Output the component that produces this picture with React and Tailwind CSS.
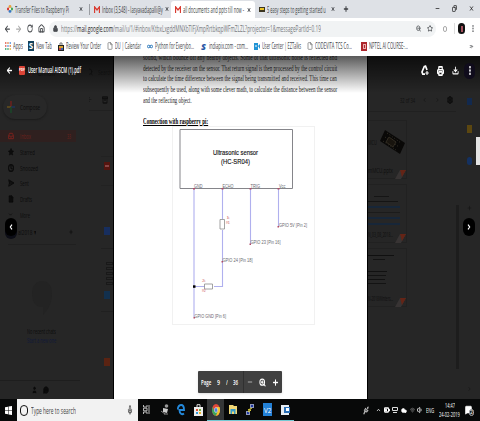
import { useLayoutEffect, useRef, useState } from "react";
import {
  ArrowLeft, ArrowRight, RotateCw, House, Lock, ZoomOut, ZoomIn, Star, Plus, Minus, X, Copy, EllipsisVertical,
  File, Printer, Download, ChevronLeft, ChevronRight, ChevronUp, ChevronDown, Clock, SendHorizontal, Inbox, Search,
  Archive, Settings, Mic, User, Wifi, Volume1, Cloud, BatteryMedium, MessageSquare, ChevronsRight, MessageCircleMore, Usb,
} from "lucide-react";

// Single line of text squeezed to an exact width
function Fit({ w, className = "", children }) {
  const ref = useRef(null);
  const [scale, setScale] = useState(1);
  useLayoutEffect(() => {
    const measure = () => ref.current && setScale(w / ref.current.offsetWidth);
    measure();
    document.fonts.ready.then(measure);
  }, [w]);
  return (
    <span className={"block shrink-0 leading-none " + className} style={{ width: w }}>
      <span ref={ref} className="inline-block origin-left whitespace-nowrap align-top" style={{ transform: `scaleX(${scale})` }}>
        {children}
      </span>
    </span>
  );
}

const squash = { preserveAspectRatio: "none" };

function GmailM() {
  return (
    <svg className="h-[7px] w-[6px] shrink-0" viewBox="0 0 6 7" preserveAspectRatio="none">
      <path d="M.5 7V.8L3 4 5.5.8V7" fill="none" stroke="#d93b30" strokeWidth="1.3" />
    </svg>
  );
}

function Tabs() {
  return (
    <div className="flex h-[18px] shrink-0 items-center bg-[#dee1e6] text-[9px] text-[#3c3f43]">
      <div className="flex w-[88px] items-center pl-[7px]">
        <svg className="mr-[2px] h-[8px] w-[6px]" viewBox="0 0 6 8">
          <circle cx="3" cy="1.5" r="1.4" fill="#e9a13b" /><circle cx="1.3" cy="4" r="1.4" fill="#d63d38" />
          <circle cx="4.7" cy="4" r="1.4" fill="#45a857" /><circle cx="3" cy="6.4" r="1.4" fill="#3779c2" />
          <circle cx="3" cy="4" r="1" fill="#fff" />
        </svg>
        <Fit w={54}>Transfer Files to Raspberry Pi</Fit>
        <X {...squash} className="ml-[10px] h-[6px] w-[4px]" strokeWidth={4} />
      </div>
      <div className="flex h-full w-[83px] items-center border-l border-transparent pl-[2px]">
        <span className="mr-[2px] h-[11px] w-px -translate-x-[2px] bg-[#9a9da2]" />
        <GmailM />
        <Fit w={61} className="ml-[2px]">Inbox (3,548) - lasyavadapalli@y</Fit>
        <X {...squash} className="ml-[2px] h-[6px] w-[4px] shrink-0" strokeWidth={4} />
      </div>
      <div className="mt-[2px] flex h-[18px] w-[84px] items-center rounded-t-[3px] bg-white pb-[1px] pl-[4px]">
        <GmailM />
        <Fit w={61} className="ml-[2px]">all documents and ppts till now -</Fit>
        <X {...squash} className="ml-[3px] h-[6px] w-[4px] shrink-0" strokeWidth={4} />
      </div>
      <div className="flex items-center pl-[4px]">
        <span className="flex h-[5px] w-[6px] items-center justify-center bg-[#3b3522]"><i className="h-[2px] w-[4px] bg-[#eac324]" /></span>
        <Fit w={59} className="ml-[2px]">5 easy steps to getting started u</Fit>
        <X {...squash} className="ml-[5px] h-[6px] w-[4px]" strokeWidth={4} />
        <Plus {...squash} className="ml-[8px] h-[8px] w-[6px]" strokeWidth={4} />
      </div>
      <div className="mb-[2px] ml-auto flex items-center gap-[12px] pr-[6px] text-[#222]">
        <Minus {...squash} className="h-[7px] w-[5px]" strokeWidth={3} />
        <Copy {...squash} className="h-[7px] w-[5px] -scale-x-100" strokeWidth={3} />
        <X {...squash} className="h-[7px] w-[5px]" strokeWidth={3} />
      </div>
    </div>
  );
}

function AddressBar() {
  return (
    <div className="flex h-[21px] shrink-0 items-center bg-white pl-[4px] text-[#4a4d51]">
      <ArrowLeft {...squash} className="h-[10px] w-[7px]" strokeWidth={3} />
      <ArrowRight {...squash} className="ml-[4px] h-[10px] w-[7px] text-[#aaa]" strokeWidth={3} />
      <RotateCw {...squash} className="ml-[5px] h-[9px] w-[6px]" strokeWidth={3} />
      <House {...squash} className="ml-[5px] h-[9px] w-[7px]" strokeWidth={3} />
      <div className="ml-[4px] flex h-[16px] w-[387px] items-center rounded-full bg-[#f1f3f4] pl-[4px] text-[9px]">
        <Lock {...squash} className="h-[7px] w-[5px]" strokeWidth={3} fill="currentColor" />
        <Fit w={260} className="ml-[3px] text-[#777a7e]">
          https://<span className="text-[#222]">mail.google.com</span>/mail/u/1/#inbox/KtbxLxgddMNXbTlFjXmpRrtbkqpWFmZLZL?projector=1&amp;messagePartId=0.19
        </Fit>
        <ZoomOut {...squash} className="ml-[95px] h-[7px] w-[5px] shrink-0" strokeWidth={3} />
        <Star {...squash} className="ml-[6px] h-[7px] w-[6px] shrink-0" strokeWidth={3} />
      </div>
      <span className="ml-[7px] h-[6px] w-[4px] rounded-full border border-[#aaa]" />
      <span className="ml-[7px] h-[11px] w-px bg-[#ddd]" />
      <span className="ml-[3px] flex h-[11px] w-[7px] items-center justify-center rounded-full bg-[#111]"><i className="h-[6px] w-[2px] bg-[#a4515d]" /></span>
      <EllipsisVertical {...squash} className="ml-[5px] h-[9px] w-[6px]" strokeWidth={3} />
    </div>
  );
}

function Bookmark({ icon, w, gap, children }) {
  return (
    <div className={"flex shrink-0 items-center " + gap}>
      {icon}
      <Fit w={w}>{children}</Fit>
    </div>
  );
}

function Bookmarks() {
  const page = <File {...squash} className="mr-[2px] h-[8px] w-[6px] text-[#777]" strokeWidth={2.5} />;
  return (
    <div className="flex h-[17px] shrink-0 items-center bg-white pb-[3px] pl-[5px] text-[8.5px] text-[#414448]">
      <Bookmark gap="" w={10} icon={
        <svg className="mr-[2px] h-[8px] w-[6px]" viewBox="0 0 6 8">
          <path d="M0 1h1.4M0 4h1.4" stroke="#dd5144" strokeWidth="1.5" /><path d="M2.3 1h1.4M4.6 4H6" stroke="#d97736" strokeWidth="1.5" />
          <path d="M4.6 1H6M2.3 4h1.4" stroke="#4388dc" strokeWidth="1.5" /><path d="M0 7h1.4M2.3 7h1.4" stroke="#29985f" strokeWidth="1.5" /><path d="M4.6 7H6" stroke="#e6b32e" strokeWidth="1.5" />
        </svg>}>Apps</Bookmark>
      <Bookmark gap="ml-[5px]" w={16} icon={<span className="mr-[2px] flex h-[10px] w-[6px] items-center justify-center bg-[#14415b] text-[8px] font-bold leading-none text-white">S</span>}>New Tab</Bookmark>
      <Bookmark gap="ml-[6px]" w={35} icon={
        <svg className="mr-[2px] h-[9px] w-[6px]" viewBox="0 0 6 9"><path d="M0 3h6v6H0z" fill="#222" /><path d="M2 3V1h2v2" fill="none" stroke="#777" /><path d="M1 4h4v2H1z" fill="#d9a436" /><path d="M1 6h2v2H1z" fill="#c24444" /><path d="M3 6h2v2H3z" fill="#3c65b4" /></svg>}>Review Your Order</Bookmark>
      <Bookmark gap="ml-[6px]" w={26} icon={page}>DU | Calendar</Bookmark>
      <Bookmark gap="ml-[6px]" w={39} icon={<svg className="mr-[2px] h-[5px] w-[6px]" viewBox="0 0 6 5"><circle cx="1.7" cy="2.5" r="1.3" fill="none" stroke="#2976ba" /><circle cx="4.3" cy="2.5" r="1.3" fill="none" stroke="#2976ba" /></svg>}>Python for Everybo...</Bookmark>
      <Bookmark gap="ml-[7px]" w={39} icon={<span className="mr-[2px] w-[6px] text-[9px] font-extrabold italic leading-none text-[#2757a5]">S</span>}>indiapix.com - com...</Bookmark>
      <Bookmark gap="ml-[6px]" w={39} icon={<svg className="mr-[2px] h-[7px] w-[6px]" viewBox="0 0 6 7"><path d="M0 0h4v7H0zM4 3l2-2v5z" fill="#2194d5" /><path d="M1 3h2" stroke="#fff" /></svg>}>User Center | EZTalks</Bookmark>
      <Bookmark gap="ml-[6px]" w={37} icon={page}>CODEVITA TCS Co...</Bookmark>
      <Bookmark gap="ml-[9px]" w={39} icon={<span className="mr-[2px] flex h-[9px] w-[6px] items-center justify-center bg-[#ad252c]"><i className="h-[5px] w-[3px] border border-[#e9adad]" /></span>}>NPTEL AI COURSE-...</Bookmark>
      <ChevronsRight {...squash} className="ml-auto mr-[6px] h-[5px] w-[5px]" strokeWidth={4} />
    </div>
  );
}

function FolderRow({ icon, label, w, active, count }) {
  return (
    <div className={"mb-[3.8px] flex h-[12px] w-[76px] shrink-0 items-center pl-[8px] " + (active ? "bg-[#2f201f] text-[#6b211d]" : "text-[#0c0c0c]")}>
      <span className="w-[12px]">{icon}</span>
      <Fit w={w}>{label}</Fit>
      {count && <Fit w={4} className="ml-[36px]">{count}</Fit>}
    </div>
  );
}

function Sidebar() {
  const ic = "h-[8px] w-[6px]";
  return (
    <div className="flex w-[89px] flex-col text-[8px] text-[#0c0c0c]">
      <div className="mt-[5px] flex h-[22px] items-center pl-[20px] opacity-60">
        <svg className="h-[8px] w-[12px]" viewBox="0 0 12 8"><path d="M1 8V1l5 4 5-4v7" fill="none" stroke="#5f1c1a" strokeWidth="1.5" /></svg>
        <Fit w={18} className="ml-[5px] text-[10px]">Gmail</Fit>
      </div>
      <div className="ml-[3px] mt-[12px] flex h-[24px] w-[44px] items-center rounded-full bg-[#282828] pl-[4px] shadow-[0_1px_2px_#1b1b1b]">
        <svg className="h-[12px] w-[8px]" viewBox="0 0 8 12"><path d="M4 0v6" stroke="#6d211c" strokeWidth="1.5" /><path d="M0 6h4" stroke="#67501b" strokeWidth="1.5" /><path d="M4 6h4" stroke="#1d3559" strokeWidth="1.5" /><path d="M4 6v6" stroke="#1a4728" strokeWidth="1.5" /></svg>
        <Fit w={20} className="ml-[5px]">Compose</Fit>
      </div>
      <div className="mt-[11px] flex flex-col">
        <FolderRow active label="Inbox" w={11} count="33" icon={<Inbox {...squash} className={ic} strokeWidth={4} />} />
        <FolderRow label="Starred" w={15} icon={<Star {...squash} className={ic} fill="currentColor" />} />
        <FolderRow label="Snoozed" w={18} icon={<Clock {...squash} className={ic} strokeWidth={5} />} />
        <FolderRow label="Sent" w={9} icon={<SendHorizontal {...squash} className={ic} strokeWidth={4} />} />
        <FolderRow label="Drafts" w={12} icon={<File {...squash} className={ic} fill="currentColor" />} />
        <FolderRow label="More" w={10} icon={<ChevronDown {...squash} className="h-[5px] w-[5px]" strokeWidth={3} />} />
      </div>
      <div className="mt-[1px] flex h-[13px] items-center pl-[5px]">
        <span className="h-[14px] w-[12px] rounded-full bg-[#0c0d16]" />
        <Fit w={18} className="ml-[1px]">al2018 ▾</Fit>
        <Plus {...squash} className="ml-[33px] h-[6px] w-[4px] shrink-0" strokeWidth={3} />
      </div>
      <div className="ml-[8px] mt-[5px] h-px w-[68px] bg-[#202020]" />
      <svg className="ml-[32px] mt-[36px] h-[34px] w-[20px]" viewBox="0 0 20 34"><path d="M10 0C4 0 0 5 0 13s4 13 9 13h2v8c5-5 9-12 9-21S16 0 10 0z" fill="#232323" /></svg>
      <Fit w={29} className="ml-[27px] mt-[12px]">No recent chats</Fit>
      <Fit w={29} className="ml-[27px] mt-[1.5px] text-[#10193a]">Start a new one</Fit>
      <div className="mt-[36px] h-px w-[80px] bg-[#1e1e1e]" />
      <div className="mt-[5px] flex gap-[6px] pl-[32px]">
        <User {...squash} className="h-[8px] w-[5px]" fill="currentColor" />
        <MessageCircleMore {...squash} className="h-[8px] w-[6px]" fill="currentColor" />
      </div>
    </div>
  );
}

function MailColumn() {
  return (
    <div className="flex flex-1 flex-col overflow-hidden text-[#101010]">
      <div className="mt-[8px] flex h-[16px] items-center gap-[5px] opacity-70">
        <Search {...squash} className="ml-[-2px] h-[8px] w-[6px] shrink-0" strokeWidth={3} />
        <Fit w={14} className="text-[7px]">Search</Fit>
      </div>
      <div className="mt-[15px] flex h-[9px] items-center gap-[10px]">
        <ArrowLeft {...squash} className="ml-[-2px] h-[7px] w-[5px] shrink-0" strokeWidth={2} />
        <Archive {...squash} className="h-[8px] w-[6px] shrink-0" strokeWidth={4} />
      </div>
      <div className="mt-[6px] h-px bg-[#202020]" />
      <div className="ml-[12px] mt-[45px] h-[30px] border-y border-[#222] pt-[5px]"><span className="ml-[3px] flex h-[8px] w-[6px] items-center justify-center bg-[#54150f]"><i className="h-[2px] w-[4px] bg-[#844]" /></span></div>
      <div className="ml-[12px] mt-[41px] h-[22px] border-b border-[#202020]"><span className="ml-[3px] block h-[8px] w-[6px] bg-[#172e5e]" /></div>
      <div className="ml-[17px] mt-[13px] flex flex-col gap-[2px]">
        {[0, 1, 2, 3, 4].map((i) => <span key={i} className="h-[3px] w-[7px] border border-[#191919]" />)}
      </div>
      <div className="ml-[12px] mt-[6px] h-[21px] border-b border-[#202020]"><span className="ml-[3px] block h-[8px] w-[6px] bg-[#12304e]" /></div>
      <span className="ml-[15px] mt-[46px] block h-[8px] w-[6px] bg-[#5a2312]" />
    </div>
  );
}

const wireLabels = [
  [194, 188, 8.5, "GND"], [222.5, 188, 11, "ECHO"], [250.5, 188, 9.5, "TRIG"], [279, 188, 6.5, "Vcc"],
  [279, 226.5, 28, "GPIO 5V [Pin 2]"], [250.5, 244, 30, "GPIO 23 [Pin 16]"],
  [222.5, 261.5, 30, "GPIO 24 [Pin 18]"], [194.5, 317.5, 31.5, "GPIO GND [Pin 6]"],
];

function Circuit() {
  return (
    <svg className="ml-[58px] h-[199px] w-[143px] shrink-0" viewBox="172 126 143 199" fontFamily="'Liberation Sans', Arial, sans-serif">
      <rect x="172.5" y="126.5" width="142" height="198" fill="#fff" stroke="#f1f1f1" />
      <path d="M180 129.5h112.500v59H180z" fill="none" stroke="#85858a" />
      <g fontSize="7.500" fill="#111" stroke="#111" strokeWidth=".15">
        <text x="213" y="155" textLength="45" lengthAdjust="spacingAndGlyphs">Ultrasonic sensor</text>
        <text x="221" y="163.500" textLength="29" lengthAdjust="spacingAndGlyphs">(HC-SR04)</text>
      </g>
      <path d="M194 189v128M222.500 189v30m0 11v56.500H214m-9 0h-11M250.500 189v55M278.500 189v38" fill="none" stroke="#b0b0ee" strokeWidth="1.1" />
      <path d="M220 219.500h4.500v9.500H220zM204.500 284h8v5h-8z" fill="#fff" stroke="#8c8c8c" strokeWidth=".8" />
      <rect x="193" y="285.300" width="2.500" height="2.500" fill="#000" />
      <g fill="#b04b66">
        <path d="M193 188h2v1.500h-2zM221.500 188h2v1.500h-2zM249.500 188h2v1.500h-2zM277.500 188h2v1.500h-2zM277.500 226h1.500v1.500h-1.500zM249.500 243.500h1.500v1.500h-1.500zM221.500 261h1.500v1.500h-1.500zM193.500 317h1.500v1.500h-1.500z" />
      </g>
      <g fontSize="4" fill="#d98686">
        <text x="226.500" y="219" textLength="3">1k</text><text x="226" y="223.500" textLength="4">R1</text>
        <text x="202" y="282" textLength="3.500">2k</text><text x="202" y="292" textLength="4">R2</text>
      </g>
      <g fontSize="5.4" fill="#6a6a6f">
        {wireLabels.map(([x, y, w, t]) => <text key={t} x={x} y={y} textLength={w} lengthAdjust="spacingAndGlyphs">{t}</text>)}
      </g>
    </svg>
  );
}

function DocumentPage() {
  const lines = [
    "sound, which bounce off any nearby objects. Some of that ultrasonic noise is reflected and",
    "detected by the receiver on the sensor. That return signal is then processed by the control circuit",
    "to calculate the time difference between the signal being transmitted and received. This time can",
    "subsequently be used, along with some clever math, to calculate the distance between the sensor",
  ];
  return (
    <div className="flex h-full w-[253px] shrink-0 flex-col overflow-hidden bg-white font-['Liberation_Serif',serif] text-[8.5px] text-[#1c1c1c]">
      <div className="-mt-[4px] flex flex-col pl-[29px]">
        {lines.map((l) => <div key={l} className="flex h-[10.7px] items-center"><Fit w={194}>{l}</Fit></div>)}
        <div className="flex h-[10.700px] items-center"><Fit w={49}>and the reflecting object.</Fit></div>
        <div className="mt-[11px] flex h-[10px] items-center"><Fit w={65} className="font-bold text-black"><u>Connection with raspberry pi:</u></Fit></div>
      </div>
      <Circuit />
    </div>
  );
}

function Attachment({ title, children }) {
  return (
    <div className="h-[59px] w-[39px] border border-l-0 border-[#212121]">
      <div className="h-[41px] overflow-hidden">{children}</div>
      <div className="flex h-[17px] items-end justify-between">
        <Fit w={25} className="self-center text-[7px] text-[#0f0f0f]">{title}</Fit>
        <svg className="h-[9px] w-[11px]" viewBox="0 0 11 9"><path d="M5 0h6L6 9H0z" fill="#383434" /><path d="M5 0h6L7 7z" fill="#642416" /></svg>
      </div>
    </div>
  );
}

function RightPanel() {
  return (
    <div className="flex flex-1 border-l border-black bg-[#262626] text-[#101010]">
      <div className="flex w-[91px] flex-col">
        <div className="mt-[39px] flex h-[10px] items-center pl-[32px]">
          <Fit w={15} className="text-[7px]">32 of 34</Fit>
          <ChevronLeft {...squash} className="ml-[7px] h-[6px] w-[5px] shrink-0" />
          <ChevronRight {...squash} className="ml-[8px] h-[6px] w-[5px] shrink-0" />
          <Settings {...squash} className="ml-[7px] h-[8px] w-[6px] shrink-0" strokeWidth={5} />
        </div>
        <div className="mt-[6px] h-px w-[88px] bg-[#202020]" />
        <div className="mt-[8px] flex flex-1 justify-between">
          <div className="flex flex-col gap-[5px]">
            <Attachment title="mMCU.pptx">
              <div className="mt-[8px] flex items-center">
                <Fit w={9} className="text-[7px]">MCU</Fit>
                <svg className="ml-[3px] h-[26px] w-[26px]" viewBox="0 0 26 26"><path d="M5 1l20 13-5 11L0 12z" fill="#090807" /><path d="M7 4l14 10M5 8l14 10M3 12l13 9" stroke="#353126" strokeDasharray="1 2" /><path d="M9 8l7 5-3 5-7-5z" fill="#18140e" stroke="#302b22" /></svg>
              </div>
            </Attachment>
            <Attachment title="N_03_08_2018...">
              <div className="flex flex-col gap-[4px] pt-[11px]">
                <i className="ml-[6px] h-px w-[15px] bg-[#151515]" /><i className="h-px w-[30px] bg-[#141414]" />
                <i className="h-[2px] w-[32px] bg-[#172638]" /><i className="h-px w-[32px] bg-[#1b1b1b]" />
                <i className="h-[2px] w-[32px] bg-[#172638]" /><i className="h-[2px] w-[32px] bg-[#172638]" />
              </div>
            </Attachment>
            <Attachment title="N-2018Winters...">
              <div className="flex flex-col gap-[3px] pt-[6px]">
                <i className="h-px w-[26px] bg-[#101010]" /><i className="ml-[5px] h-px w-[12px] bg-[#131313]" />
                <i className="mt-[8px] h-px w-[19px] bg-[#111]" /><i className="h-px w-[18px] bg-[#131313]" /><i className="h-px w-[17px] bg-[#111]" /><i className="h-px w-[18px] bg-[#131313]" />
              </div>
            </Attachment>
          </div>
          <div className="mt-[85px] h-[164px] w-[3px] self-start bg-[#1d1d1d]" />
        </div>
      </div>
      <div className="flex flex-1 flex-col items-center">
        <span className="mt-[42px] h-[7px] w-[5px] bg-[#12294e]" />
        <span className="mt-[20px] h-[8px] w-[5px] bg-[#5c4710]" />
        <div className="mt-[4px] flex h-[28px] w-full items-center justify-end">
          <span className="h-[28px] w-[4px] bg-[#e4e4e4]" />
        </div>
        <span className="-mt-[8px] h-[8px] w-[5px] rounded-full bg-[#143161]" />
        <Plus {...squash} className="mt-[40px] h-[6px] w-[5px]" />
        <ChevronRight {...squash} className="mt-[175px] h-[6px] w-[5px]" />
      </div>
    </div>
  );
}

function ViewerHeader() {
  return (
    <div className="absolute inset-x-0 top-0 flex h-[37px] items-start bg-linear-to-b from-black/65 to-transparent pt-[9px] text-white">
      <div className="flex h-[11px] items-center pl-[6px]">
        <ArrowLeft {...squash} className="h-[9px] w-[7px]" strokeWidth={3.5} />
        <span className="ml-[6px] flex h-[9px] w-[6px] items-center justify-center rounded-[1px] bg-[#db4437] text-[3px] font-bold leading-none">PDF</span>
        <Fit w={53} className="ml-[3px] text-[8.5px] font-semibold">User Manual AISCM (1).pdf</Fit>
      </div>
      <div className="ml-auto flex h-[11px] items-center pr-[5px]">
        <svg className="h-[11px] w-[8px]" viewBox="0 0 8 11"><path d="M3.500 1h1l1.500 4M3.500 1L1 7l.8 2.200H4" fill="none" stroke="#fff" strokeWidth="1.700" /><path d="M6 6v4M4.300 8h3.500" stroke="#fff" strokeWidth="1.100" /></svg>
        <Printer {...squash} className="ml-[8px] h-[10px] w-[7px]" strokeWidth={4} />
        <Download {...squash} className="ml-[8px] h-[9px] w-[7px]" strokeWidth={3} />
        <span className="ml-[5px] flex h-[16px] w-[11px] items-center justify-center rounded-full bg-[#100c1c]"><EllipsisVertical {...squash} className="h-[11px] w-[8px]" strokeWidth={3.5} /></span>
      </div>
    </div>
  );
}

function PageControls() {
  return (
    <div className="absolute left-[198px] top-[315px] flex h-[22px] w-[84px] items-center rounded-[1px] bg-[#404040] text-[7px] font-semibold text-white shadow">
      <Fit w={10} className="ml-[3px]">Page</Fit>
      <Fit w={3} className="ml-[6px]">9</Fit>
      <Fit w={2} className="ml-[6px]">/</Fit>
      <Fit w={5} className="ml-[5px]">36</Fit>
      <span className="ml-[5px] h-full w-px bg-[#303030]" />
      <Minus {...squash} className="ml-[3px] h-[8px] w-[6px] text-[#bbb]" strokeWidth={3} />
      <ZoomIn {...squash} className="ml-[6px] h-[9px] w-[7px]" strokeWidth={3.500} />
      <Plus {...squash} className="ml-[6px] h-[9px] w-[7px]" strokeWidth={3.500} />
    </div>
  );
}

function Viewer() {
  return (
    <main className="relative flex h-[343px] shrink-0 overflow-hidden">
      <div className="flex w-[114px] shrink-0 border-r border-black bg-[#262626]">
        <Sidebar />
        <MailColumn />
      </div>
      <DocumentPage />
      <RightPanel />
      <ViewerHeader />
      <span className="absolute left-[5px] top-[162px] flex h-[18px] w-[12px] items-center justify-center rounded-full bg-black text-white"><ChevronLeft {...squash} className="h-[8px] w-[6px]" strokeWidth={4} /></span>
      <span className="absolute right-[5px] top-[162px] flex h-[18px] w-[12px] items-center justify-center rounded-full bg-black text-white"><ChevronRight {...squash} className="h-[8px] w-[6px]" strokeWidth={4} /></span>
      <PageControls />
    </main>
  );
}

function AppSlot({ active, open, children }) {
  return (
    <div className={"flex h-full w-[17.300px] shrink-0 items-center justify-center border-b border-transparent " + (active ? "border-b-[#74c9d3]! bg-[#343637]" : open ? "border-b-[#74c9d3]!" : "")}>
      {children}
    </div>
  );
}

function Taskbar() {
  return (
    <footer className="flex h-[22px] shrink-0 items-center bg-[#080909] text-white">
      <div className="flex w-[17px] justify-center">
        <svg className="h-[9px] w-[7px]" viewBox="0 0 7 9" preserveAspectRatio="none"><path d="M0 1.200l3-.5v3.500H0zM3.500.6L7 0v4.200H3.500zM0 4.800h3v3.500l-3-.5zM3.500 4.800H7V9l-3.500-.6z" fill="#fff" /></svg>
      </div>
      <div className="flex h-full w-[121px] items-center bg-[#f2f2f2] text-[#444]">
        <span className="ml-[3px] h-[11px] w-[8px] rounded-full border-[1.500px] border-[#111]" />
        <Fit w={45} className="ml-[3px] text-[9px]">Type here to search</Fit>
        <Mic {...squash} className="ml-[51px] h-[10px] w-[6px]" strokeWidth={2.500} />
      </div>
      <AppSlot><svg className="h-[9px] w-[7px]" viewBox="0 0 7 9"><path d="M.5 0v2h3.500V0M.5 9V7h3.500v2M.5 3.200h3.500v2.600H.5zM6 0v9" fill="none" stroke="#ccc" strokeWidth=".9" /></svg></AppSlot>
      <AppSlot><svg className="ml-[3px] h-[11px] w-[8px]" viewBox="0 0 8 11"><circle cx="5.500" cy="2" r="1.800" fill="#999" /><path d="M2 4l5 1-1 4-4-1z" fill="#ccc" /><path d="M0 7l4 3M3 10h4" stroke="#888" /></svg></AppSlot>
      <AppSlot><svg className="h-[12px] w-[8px]" viewBox="0 0 8 12" preserveAspectRatio="none"><path d="M.7 5.500C1 2.500 2.500 1 4.200 1 6.200 1 7 3 7 6H2.500c0 4 2.500 5 4.500 3.500" fill="none" stroke="#2489db" strokeWidth="1.900" /></svg></AppSlot>
      <AppSlot><svg className="h-[12px] w-[9px]" viewBox="0 0 9 12"><path d="M0 3h9v9H0z" fill="#eee" /><path d="M3 3V.7h3V3" fill="none" stroke="#ddd" /><path d="M2 5h2v2H2z" fill="#dd5335" /><path d="M5 5h2v2H5z" fill="#70b33b" /><path d="M2 8h2v2H2z" fill="#369bd7" /><path d="M5 8h2v2H5z" fill="#eeb52c" /></svg></AppSlot>
      <AppSlot active><svg className="h-[12px] w-[8px]" viewBox="0 0 12 12" preserveAspectRatio="none"><circle cx="6" cy="6" r="6" fill="#e0493a" /><path d="M.8 3A6 6 0 006 12l2.600-5H3.500z" fill="#3ca65b" /><path d="M11.200 3A6 6 0 016 12l2.600-5L7 3z" fill="#f1c52f" /><circle cx="6" cy="6" r="2.700" fill="#eee" /><circle cx="6" cy="6" r="2.100" fill="#4a82df" /></svg></AppSlot>
      <AppSlot open><svg className="h-[9px] w-[8px]" viewBox="0 0 8 9"><path d="M0 0h4l1 1h3v8H0z" fill="#f1d876" /><path d="M1.500 4h5v5H5V6.500H3V9H1.500z" fill="#389ac7" /></svg></AppSlot>
      <AppSlot open><svg className="h-[12px] w-[8px]" viewBox="0 0 8 12"><path d="M4 0h4v4H4zM0 7h4v4H0z" fill="#8e9abd" /><path d="M5 1h2v2H5zM1 8h2v2H1z" fill="#2036a0" /><path d="M6 4L2 6h3L2 8" fill="none" stroke="#e1d13d" /></svg></AppSlot>
      <AppSlot open><span className="flex h-[13px] w-[9px] items-center justify-center bg-[#2381d7]"><Fit w={7} className="text-[8px]">V2</Fit></span></AppSlot>
      <AppSlot open><svg className="h-[12px] w-[9px]" viewBox="0 0 9 12"><path d="M0 1h8v10H0z" fill="#e6edf4" /><path d="M3 3h6v6H3z" fill="#2a6fb5" /><path d="M5 4h3v3H5z" fill="#fff" /></svg></AppSlot>
      <div className="ml-auto flex items-center pr-[8px]">
        <Usb {...squash} className="h-[9px] w-[6px] text-[#bbb]" strokeWidth={3} />
        <ChevronUp {...squash} className="ml-[7px] h-[6px] w-[5px]" strokeWidth={3} />
        <BatteryMedium {...squash} className="ml-[3px] h-[8px] w-[6px]" strokeWidth={4} />
        <svg className="ml-[2px] h-[6px] w-[6px]" viewBox="0 0 6 6"><path d="M.5.500h5v3h-5zM1 5.500h4" fill="none" stroke="#ddd" /></svg>
        <Cloud {...squash} className="ml-[3px] h-[7px] w-[6px]" fill="currentColor" />
        <Wifi {...squash} className="ml-[3px] h-[6px] w-[5px] text-[#888]" strokeWidth={3} />
        <Volume1 {...squash} className="ml-[2px] h-[8px] w-[6px]" strokeWidth={2.500} />
        <Fit w={8} className="ml-[3px] text-[7px]">ENG</Fit>
        <div className="ml-[5px] flex flex-col items-center gap-[2px] text-[7px]">
          <Fit w={10}>14:47</Fit>
          <Fit w={21}>24-02-2019</Fit>
        </div>
        <span className="relative ml-[5px] block">
          <MessageSquare {...squash} className="h-[10px] w-[7px]" fill="currentColor" />
          <span className="absolute -right-[2px] top-[4px] flex h-[7px] w-[5px] items-center justify-center rounded-full border border-[#aaa] bg-[#222] text-[5px] leading-none">2</span>
        </span>
      </div>
    </footer>
  );
}

export default function App() {
  return (
    <div className="flex h-[421px] w-[480px] flex-col overflow-hidden bg-[#262626] font-['Open_Sans',sans-serif]">
      <Tabs />
      <AddressBar />
      <Bookmarks />
      <Viewer />
      <Taskbar />
    </div>
  );
}
